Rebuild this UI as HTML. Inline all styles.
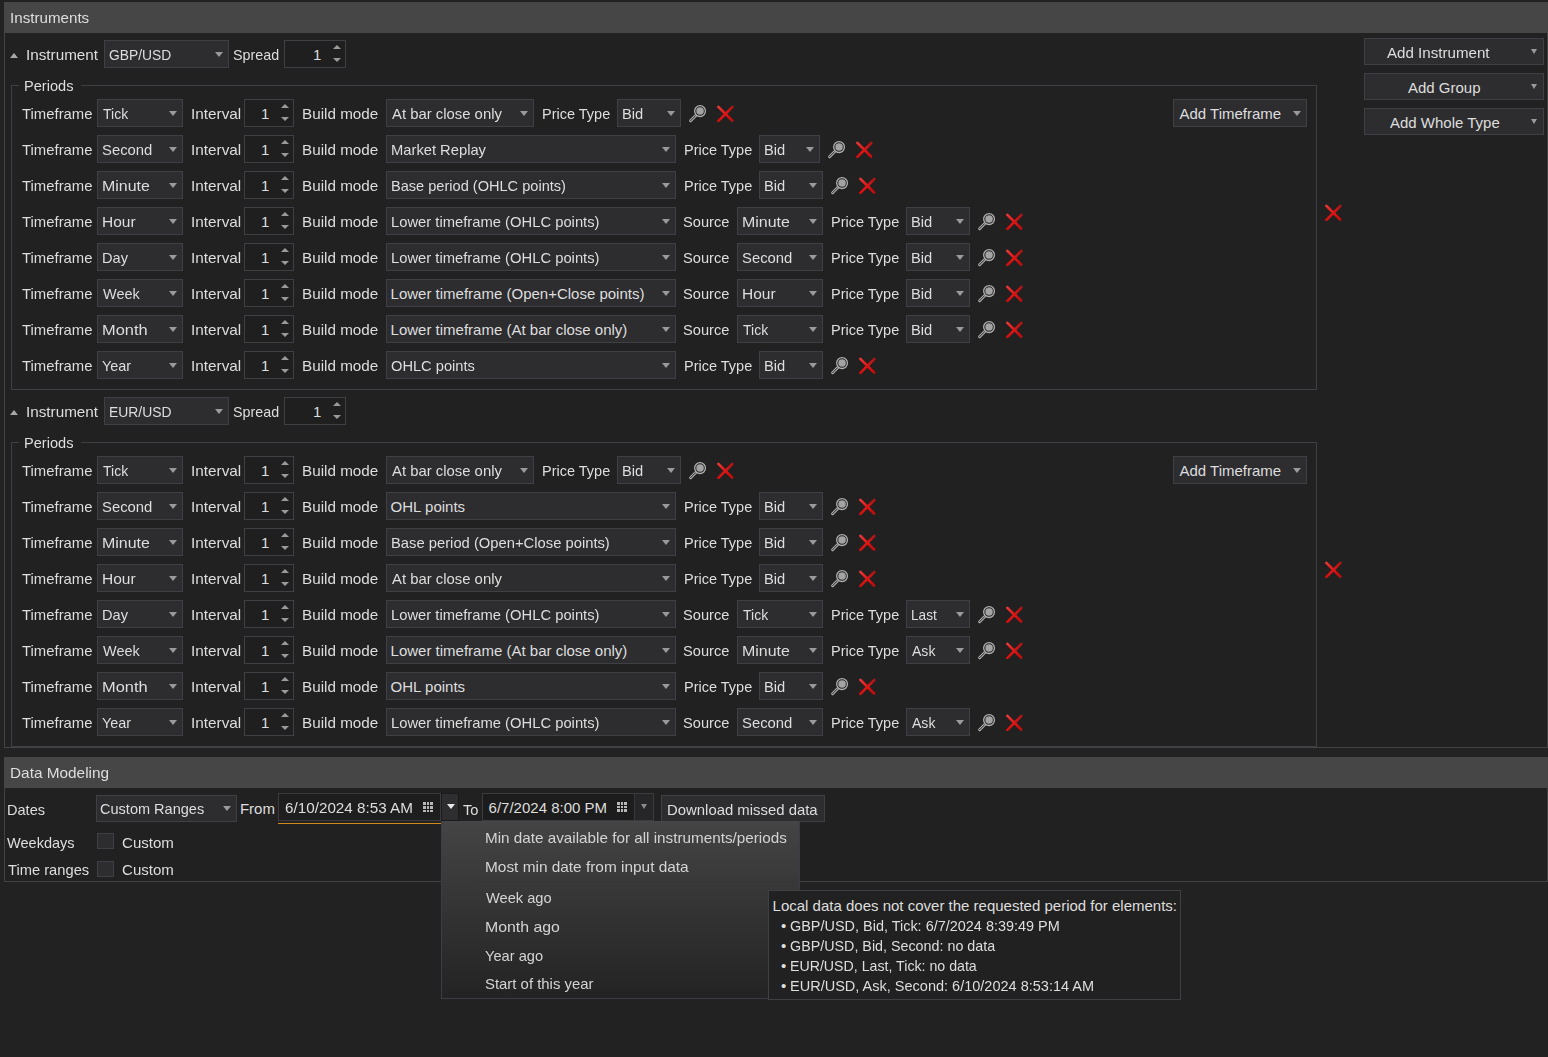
<!DOCTYPE html><html><head><meta charset="utf-8"><style>
html,body{margin:0;padding:0;}
body{width:1548px;height:1057px;background:#222222;position:relative;overflow:hidden;font-family:"Liberation Sans",sans-serif;font-size:15px;color:#dedede;}
.t{position:absolute;white-space:nowrap;line-height:17px;transform-origin:0 0;}
.cb,.nb,.bt,.pnl,.hdr,.gb,.ad,.ic{position:absolute;box-sizing:border-box;}
.hdr{background:#464646;}
.pnl{background:#212121;border-left:1px solid #434343;border-right:1px solid #434343;border-bottom:1px solid #434343;}
.gb{border:1px solid #3f3f46;}
.cb{background:#2d2d30;border:1px solid #3f3f46;}
.nb{background:#1f1f1f;border:1px solid #3f3f46;}
.bt{background:#2d2d30;border:1px solid #3f3f46;}
.ad{width:0;height:0;}
</style></head><body>
<svg width="0" height="0" style="position:absolute"><defs>
<filter id="bl" x="-30%" y="-30%" width="160%" height="160%"><feGaussianBlur stdDeviation="0.55"/></filter>
<linearGradient id="rg1" gradientUnits="userSpaceOnUse" x1="5" y1="4" x2="19" y2="18"><stop offset="0" stop-color="#ea3a3a"/><stop offset="0.5" stop-color="#e21818"/><stop offset="1" stop-color="#c00a0a"/></linearGradient><linearGradient id="rg2" gradientUnits="userSpaceOnUse" x1="19" y1="4" x2="5" y2="18"><stop offset="0" stop-color="#a81414"/><stop offset="0.5" stop-color="#d81818"/><stop offset="1" stop-color="#d41010"/></linearGradient>
</defs></svg>

<div class="hdr" style="left:4px;top:2px;width:1544px;height:31px;"></div>
<div class="t" style="left:9.60px;top:9.00px;transform:scaleX(1.0104);">Instruments</div>
<div class="pnl" style="left:4px;top:33px;width:1544px;height:715px;"></div>
<div class="ad" style="left:10.3px;top:52.5px;border-left:4.0px solid transparent;border-right:4.0px solid transparent;border-bottom:5px solid #a8a8a8;"></div>
<div class="t" style="left:25.60px;top:46.00px;transform:scaleX(1.0171);">Instrument</div>
<div class="cb" style="left:104px;top:40px;width:125px;height:28px;"></div>
<div class="t" style="left:109.10px;top:46.00px;transform:scaleX(0.9227);">GBP/USD</div>
<div class="ad" style="left:215.0px;top:52.0px;border-left:4.0px solid transparent;border-right:4.0px solid transparent;border-top:5px solid #9a9a9a;"></div>
<div class="t" style="left:233.20px;top:46.00px;transform:scaleX(0.9532);">Spread</div>
<div class="nb" style="left:284px;top:40px;width:62px;height:28px;"></div>
<div class="t" style="left:313px;top:46px">1</div>
<div class="ad" style="left:333.0px;top:44.95px;border-left:4.0px solid transparent;border-right:4.0px solid transparent;border-bottom:4.5px solid #9a9a9a;"></div>
<div class="ad" style="left:333.0px;top:57.75px;border-left:4.0px solid transparent;border-right:4.0px solid transparent;border-top:4.5px solid #9a9a9a;"></div>
<div class="gb" style="left:11px;top:85px;width:1306px;height:305px;"></div>
<div style="position:absolute;left:19px;top:80px;width:62px;height:10px;background:#212121"></div>
<div class="t" style="left:23.70px;top:77.00px;transform:scaleX(0.9735);">Periods</div>
<div class="bt" style="left:1173px;top:99px;width:134px;height:28px;"></div>
<div class="t" style="left:1179.50px;top:105.00px;">Add Timeframe</div>
<div class="ad" style="left:1292.5px;top:111.0px;border-left:4.0px solid transparent;border-right:4.0px solid transparent;border-top:5px solid #9a9a9a;"></div>
<svg class="ic" style="left:1321.2px;top:200.6px" width="24" height="24" viewBox="0 0 24 24"><g stroke-width="2.7" stroke-linecap="round" filter="url(#bl)"><line x1="5.4" y1="4.9" x2="19.1" y2="18.5" stroke="url(#rg1)"/><line x1="19.3" y1="5.0" x2="5.4" y2="18.9" stroke="url(#rg2)"/></g></svg>
<div class="t" style="left:22.10px;top:105.00px;transform:scaleX(0.9915);">Timeframe</div>
<div class="cb" style="left:97px;top:99px;width:86px;height:28px;"></div>
<div class="t" style="left:102.60px;top:105.00px;transform:scaleX(0.9333);">Tick</div>
<div class="ad" style="left:169.0px;top:111.0px;border-left:4.0px solid transparent;border-right:4.0px solid transparent;border-top:5px solid #9a9a9a;"></div>
<div class="t" style="left:190.80px;top:105.00px;transform:scaleX(1.0213);">Interval</div>
<div class="nb" style="left:244px;top:99px;width:50px;height:28px;"></div>
<div class="t" style="left:261px;top:105px">1</div>
<div class="ad" style="left:281.0px;top:103.55px;border-left:4.0px solid transparent;border-right:4.0px solid transparent;border-bottom:4.5px solid #9a9a9a;"></div>
<div class="ad" style="left:281.0px;top:116.75px;border-left:4.0px solid transparent;border-right:4.0px solid transparent;border-top:4.5px solid #9a9a9a;"></div>
<div class="t" style="left:301.60px;top:105.00px;transform:scaleX(1.0162);">Build mode</div>
<div class="cb" style="left:386px;top:99px;width:148px;height:28px;"></div>
<div class="t" style="left:391.60px;top:105.00px;transform:scaleX(0.9910);">At bar close only</div>
<div class="ad" style="left:520.0px;top:111.0px;border-left:4.0px solid transparent;border-right:4.0px solid transparent;border-top:5px solid #9a9a9a;"></div>
<div class="t" style="left:541.60px;top:105.00px;transform:scaleX(0.9667);">Price Type</div>
<div class="cb" style="left:617px;top:99px;width:64px;height:28px;"></div>
<div class="t" style="left:621.60px;top:105.00px;transform:scaleX(0.9800);">Bid</div>
<div class="ad" style="left:667.0px;top:111.0px;border-left:4.0px solid transparent;border-right:4.0px solid transparent;border-top:5px solid #9a9a9a;"></div>
<svg class="ic" style="left:687px;top:101px" width="24" height="24" viewBox="0 0 24 24"><line x1="3.6" y1="19.7" x2="8.8" y2="14.5" stroke="#b0b0b0" stroke-width="2.9" stroke-linecap="round"/><line x1="3.6" y1="19.7" x2="8.8" y2="14.5" stroke="#232323" stroke-width="1.0" stroke-linecap="round"/><circle cx="13.05" cy="10.1" r="5.4" fill="#222222" stroke="#b0b0b0" stroke-width="1.3"/><circle cx="13.05" cy="10.1" r="3.75" fill="#a3a3a3"/></svg>
<svg class="ic" style="left:713.2px;top:102px" width="24" height="24" viewBox="0 0 24 24"><g stroke-width="2.7" stroke-linecap="round" filter="url(#bl)"><line x1="5.4" y1="4.9" x2="19.1" y2="18.5" stroke="url(#rg1)"/><line x1="19.3" y1="5.0" x2="5.4" y2="18.9" stroke="url(#rg2)"/></g></svg>
<div class="t" style="left:22.10px;top:141.00px;transform:scaleX(0.9915);">Timeframe</div>
<div class="cb" style="left:97px;top:135px;width:86px;height:28px;"></div>
<div class="t" style="left:101.60px;top:141.00px;transform:scaleX(0.9898);">Second</div>
<div class="ad" style="left:169.0px;top:147.0px;border-left:4.0px solid transparent;border-right:4.0px solid transparent;border-top:5px solid #9a9a9a;"></div>
<div class="t" style="left:190.80px;top:141.00px;transform:scaleX(1.0213);">Interval</div>
<div class="nb" style="left:244px;top:135px;width:50px;height:28px;"></div>
<div class="t" style="left:261px;top:141px">1</div>
<div class="ad" style="left:281.0px;top:139.55px;border-left:4.0px solid transparent;border-right:4.0px solid transparent;border-bottom:4.5px solid #9a9a9a;"></div>
<div class="ad" style="left:281.0px;top:152.75px;border-left:4.0px solid transparent;border-right:4.0px solid transparent;border-top:4.5px solid #9a9a9a;"></div>
<div class="t" style="left:301.60px;top:141.00px;transform:scaleX(1.0162);">Build mode</div>
<div class="cb" style="left:386px;top:135px;width:290px;height:28px;"></div>
<div class="t" style="left:390.60px;top:141.00px;transform:scaleX(0.9823);">Market Replay</div>
<div class="ad" style="left:662.0px;top:147.0px;border-left:4.0px solid transparent;border-right:4.0px solid transparent;border-top:5px solid #9a9a9a;"></div>
<div class="t" style="left:683.60px;top:141.00px;transform:scaleX(0.9667);">Price Type</div>
<div class="cb" style="left:759px;top:135px;width:61px;height:28px;"></div>
<div class="t" style="left:763.60px;top:141.00px;transform:scaleX(0.9800);">Bid</div>
<div class="ad" style="left:806.0px;top:147.0px;border-left:4.0px solid transparent;border-right:4.0px solid transparent;border-top:5px solid #9a9a9a;"></div>
<svg class="ic" style="left:826px;top:137px" width="24" height="24" viewBox="0 0 24 24"><line x1="3.6" y1="19.7" x2="8.8" y2="14.5" stroke="#b0b0b0" stroke-width="2.9" stroke-linecap="round"/><line x1="3.6" y1="19.7" x2="8.8" y2="14.5" stroke="#232323" stroke-width="1.0" stroke-linecap="round"/><circle cx="13.05" cy="10.1" r="5.4" fill="#222222" stroke="#b0b0b0" stroke-width="1.3"/><circle cx="13.05" cy="10.1" r="3.75" fill="#a3a3a3"/></svg>
<svg class="ic" style="left:852.2px;top:138px" width="24" height="24" viewBox="0 0 24 24"><g stroke-width="2.7" stroke-linecap="round" filter="url(#bl)"><line x1="5.4" y1="4.9" x2="19.1" y2="18.5" stroke="url(#rg1)"/><line x1="19.3" y1="5.0" x2="5.4" y2="18.9" stroke="url(#rg2)"/></g></svg>
<div class="t" style="left:22.10px;top:177.00px;transform:scaleX(0.9915);">Timeframe</div>
<div class="cb" style="left:97px;top:171px;width:86px;height:28px;"></div>
<div class="t" style="left:101.60px;top:177.00px;transform:scaleX(1.0636);">Minute</div>
<div class="ad" style="left:169.0px;top:183.0px;border-left:4.0px solid transparent;border-right:4.0px solid transparent;border-top:5px solid #9a9a9a;"></div>
<div class="t" style="left:190.80px;top:177.00px;transform:scaleX(1.0213);">Interval</div>
<div class="nb" style="left:244px;top:171px;width:50px;height:28px;"></div>
<div class="t" style="left:261px;top:177px">1</div>
<div class="ad" style="left:281.0px;top:175.55px;border-left:4.0px solid transparent;border-right:4.0px solid transparent;border-bottom:4.5px solid #9a9a9a;"></div>
<div class="ad" style="left:281.0px;top:188.75px;border-left:4.0px solid transparent;border-right:4.0px solid transparent;border-top:4.5px solid #9a9a9a;"></div>
<div class="t" style="left:301.60px;top:177.00px;transform:scaleX(1.0162);">Build mode</div>
<div class="cb" style="left:386px;top:171px;width:290px;height:28px;"></div>
<div class="t" style="left:390.60px;top:177.00px;transform:scaleX(0.9713);">Base period (OHLC points)</div>
<div class="ad" style="left:662.0px;top:183.0px;border-left:4.0px solid transparent;border-right:4.0px solid transparent;border-top:5px solid #9a9a9a;"></div>
<div class="t" style="left:683.60px;top:177.00px;transform:scaleX(0.9667);">Price Type</div>
<div class="cb" style="left:759px;top:171px;width:64px;height:28px;"></div>
<div class="t" style="left:763.60px;top:177.00px;transform:scaleX(0.9800);">Bid</div>
<div class="ad" style="left:809.0px;top:183.0px;border-left:4.0px solid transparent;border-right:4.0px solid transparent;border-top:5px solid #9a9a9a;"></div>
<svg class="ic" style="left:829px;top:173px" width="24" height="24" viewBox="0 0 24 24"><line x1="3.6" y1="19.7" x2="8.8" y2="14.5" stroke="#b0b0b0" stroke-width="2.9" stroke-linecap="round"/><line x1="3.6" y1="19.7" x2="8.8" y2="14.5" stroke="#232323" stroke-width="1.0" stroke-linecap="round"/><circle cx="13.05" cy="10.1" r="5.4" fill="#222222" stroke="#b0b0b0" stroke-width="1.3"/><circle cx="13.05" cy="10.1" r="3.75" fill="#a3a3a3"/></svg>
<svg class="ic" style="left:855.2px;top:174px" width="24" height="24" viewBox="0 0 24 24"><g stroke-width="2.7" stroke-linecap="round" filter="url(#bl)"><line x1="5.4" y1="4.9" x2="19.1" y2="18.5" stroke="url(#rg1)"/><line x1="19.3" y1="5.0" x2="5.4" y2="18.9" stroke="url(#rg2)"/></g></svg>
<div class="t" style="left:22.10px;top:213.00px;transform:scaleX(0.9915);">Timeframe</div>
<div class="cb" style="left:97px;top:207px;width:86px;height:28px;"></div>
<div class="t" style="left:101.60px;top:213.00px;transform:scaleX(1.0344);">Hour</div>
<div class="ad" style="left:169.0px;top:219.0px;border-left:4.0px solid transparent;border-right:4.0px solid transparent;border-top:5px solid #9a9a9a;"></div>
<div class="t" style="left:190.80px;top:213.00px;transform:scaleX(1.0213);">Interval</div>
<div class="nb" style="left:244px;top:207px;width:50px;height:28px;"></div>
<div class="t" style="left:261px;top:213px">1</div>
<div class="ad" style="left:281.0px;top:211.55px;border-left:4.0px solid transparent;border-right:4.0px solid transparent;border-bottom:4.5px solid #9a9a9a;"></div>
<div class="ad" style="left:281.0px;top:224.75px;border-left:4.0px solid transparent;border-right:4.0px solid transparent;border-top:4.5px solid #9a9a9a;"></div>
<div class="t" style="left:301.60px;top:213.00px;transform:scaleX(1.0162);">Build mode</div>
<div class="cb" style="left:386px;top:207px;width:290px;height:28px;"></div>
<div class="t" style="left:390.60px;top:213.00px;transform:scaleX(0.9848);">Lower timeframe (OHLC points)</div>
<div class="ad" style="left:662.0px;top:219.0px;border-left:4.0px solid transparent;border-right:4.0px solid transparent;border-top:5px solid #9a9a9a;"></div>
<div class="t" style="left:683.40px;top:213.00px;transform:scaleX(0.9761);">Source</div>
<div class="cb" style="left:737px;top:207px;width:86px;height:28px;"></div>
<div class="t" style="left:741.60px;top:213.00px;transform:scaleX(1.0636);">Minute</div>
<div class="ad" style="left:809.0px;top:219.0px;border-left:4.0px solid transparent;border-right:4.0px solid transparent;border-top:5px solid #9a9a9a;"></div>
<div class="t" style="left:830.50px;top:213.00px;transform:scaleX(0.9667);">Price Type</div>
<div class="cb" style="left:906px;top:207px;width:64px;height:28px;"></div>
<div class="t" style="left:910.60px;top:213.00px;transform:scaleX(0.9800);">Bid</div>
<div class="ad" style="left:956.0px;top:219.0px;border-left:4.0px solid transparent;border-right:4.0px solid transparent;border-top:5px solid #9a9a9a;"></div>
<svg class="ic" style="left:976px;top:209px" width="24" height="24" viewBox="0 0 24 24"><line x1="3.6" y1="19.7" x2="8.8" y2="14.5" stroke="#b0b0b0" stroke-width="2.9" stroke-linecap="round"/><line x1="3.6" y1="19.7" x2="8.8" y2="14.5" stroke="#232323" stroke-width="1.0" stroke-linecap="round"/><circle cx="13.05" cy="10.1" r="5.4" fill="#222222" stroke="#b0b0b0" stroke-width="1.3"/><circle cx="13.05" cy="10.1" r="3.75" fill="#a3a3a3"/></svg>
<svg class="ic" style="left:1002.2px;top:210px" width="24" height="24" viewBox="0 0 24 24"><g stroke-width="2.7" stroke-linecap="round" filter="url(#bl)"><line x1="5.4" y1="4.9" x2="19.1" y2="18.5" stroke="url(#rg1)"/><line x1="19.3" y1="5.0" x2="5.4" y2="18.9" stroke="url(#rg2)"/></g></svg>
<div class="t" style="left:22.10px;top:249.00px;transform:scaleX(0.9915);">Timeframe</div>
<div class="cb" style="left:97px;top:243px;width:86px;height:28px;"></div>
<div class="t" style="left:101.60px;top:249.00px;transform:scaleX(0.9731);">Day</div>
<div class="ad" style="left:169.0px;top:255.0px;border-left:4.0px solid transparent;border-right:4.0px solid transparent;border-top:5px solid #9a9a9a;"></div>
<div class="t" style="left:190.80px;top:249.00px;transform:scaleX(1.0213);">Interval</div>
<div class="nb" style="left:244px;top:243px;width:50px;height:28px;"></div>
<div class="t" style="left:261px;top:249px">1</div>
<div class="ad" style="left:281.0px;top:247.55px;border-left:4.0px solid transparent;border-right:4.0px solid transparent;border-bottom:4.5px solid #9a9a9a;"></div>
<div class="ad" style="left:281.0px;top:260.75px;border-left:4.0px solid transparent;border-right:4.0px solid transparent;border-top:4.5px solid #9a9a9a;"></div>
<div class="t" style="left:301.60px;top:249.00px;transform:scaleX(1.0162);">Build mode</div>
<div class="cb" style="left:386px;top:243px;width:290px;height:28px;"></div>
<div class="t" style="left:390.60px;top:249.00px;transform:scaleX(0.9848);">Lower timeframe (OHLC points)</div>
<div class="ad" style="left:662.0px;top:255.0px;border-left:4.0px solid transparent;border-right:4.0px solid transparent;border-top:5px solid #9a9a9a;"></div>
<div class="t" style="left:683.40px;top:249.00px;transform:scaleX(0.9761);">Source</div>
<div class="cb" style="left:737px;top:243px;width:86px;height:28px;"></div>
<div class="t" style="left:741.60px;top:249.00px;transform:scaleX(0.9898);">Second</div>
<div class="ad" style="left:809.0px;top:255.0px;border-left:4.0px solid transparent;border-right:4.0px solid transparent;border-top:5px solid #9a9a9a;"></div>
<div class="t" style="left:830.50px;top:249.00px;transform:scaleX(0.9667);">Price Type</div>
<div class="cb" style="left:906px;top:243px;width:64px;height:28px;"></div>
<div class="t" style="left:910.60px;top:249.00px;transform:scaleX(0.9800);">Bid</div>
<div class="ad" style="left:956.0px;top:255.0px;border-left:4.0px solid transparent;border-right:4.0px solid transparent;border-top:5px solid #9a9a9a;"></div>
<svg class="ic" style="left:976px;top:245px" width="24" height="24" viewBox="0 0 24 24"><line x1="3.6" y1="19.7" x2="8.8" y2="14.5" stroke="#b0b0b0" stroke-width="2.9" stroke-linecap="round"/><line x1="3.6" y1="19.7" x2="8.8" y2="14.5" stroke="#232323" stroke-width="1.0" stroke-linecap="round"/><circle cx="13.05" cy="10.1" r="5.4" fill="#222222" stroke="#b0b0b0" stroke-width="1.3"/><circle cx="13.05" cy="10.1" r="3.75" fill="#a3a3a3"/></svg>
<svg class="ic" style="left:1002.2px;top:246px" width="24" height="24" viewBox="0 0 24 24"><g stroke-width="2.7" stroke-linecap="round" filter="url(#bl)"><line x1="5.4" y1="4.9" x2="19.1" y2="18.5" stroke="url(#rg1)"/><line x1="19.3" y1="5.0" x2="5.4" y2="18.9" stroke="url(#rg2)"/></g></svg>
<div class="t" style="left:22.10px;top:285.00px;transform:scaleX(0.9915);">Timeframe</div>
<div class="cb" style="left:97px;top:279px;width:86px;height:28px;"></div>
<div class="t" style="left:102.60px;top:285.00px;transform:scaleX(0.9632);">Week</div>
<div class="ad" style="left:169.0px;top:291.0px;border-left:4.0px solid transparent;border-right:4.0px solid transparent;border-top:5px solid #9a9a9a;"></div>
<div class="t" style="left:190.80px;top:285.00px;transform:scaleX(1.0213);">Interval</div>
<div class="nb" style="left:244px;top:279px;width:50px;height:28px;"></div>
<div class="t" style="left:261px;top:285px">1</div>
<div class="ad" style="left:281.0px;top:283.55px;border-left:4.0px solid transparent;border-right:4.0px solid transparent;border-bottom:4.5px solid #9a9a9a;"></div>
<div class="ad" style="left:281.0px;top:296.75px;border-left:4.0px solid transparent;border-right:4.0px solid transparent;border-top:4.5px solid #9a9a9a;"></div>
<div class="t" style="left:301.60px;top:285.00px;transform:scaleX(1.0162);">Build mode</div>
<div class="cb" style="left:386px;top:279px;width:290px;height:28px;"></div>
<div class="t" style="left:390.60px;top:285.00px;">Lower timeframe (Open+Close points)</div>
<div class="ad" style="left:662.0px;top:291.0px;border-left:4.0px solid transparent;border-right:4.0px solid transparent;border-top:5px solid #9a9a9a;"></div>
<div class="t" style="left:683.40px;top:285.00px;transform:scaleX(0.9761);">Source</div>
<div class="cb" style="left:737px;top:279px;width:86px;height:28px;"></div>
<div class="t" style="left:741.60px;top:285.00px;transform:scaleX(1.0344);">Hour</div>
<div class="ad" style="left:809.0px;top:291.0px;border-left:4.0px solid transparent;border-right:4.0px solid transparent;border-top:5px solid #9a9a9a;"></div>
<div class="t" style="left:830.50px;top:285.00px;transform:scaleX(0.9667);">Price Type</div>
<div class="cb" style="left:906px;top:279px;width:64px;height:28px;"></div>
<div class="t" style="left:910.60px;top:285.00px;transform:scaleX(0.9800);">Bid</div>
<div class="ad" style="left:956.0px;top:291.0px;border-left:4.0px solid transparent;border-right:4.0px solid transparent;border-top:5px solid #9a9a9a;"></div>
<svg class="ic" style="left:976px;top:281px" width="24" height="24" viewBox="0 0 24 24"><line x1="3.6" y1="19.7" x2="8.8" y2="14.5" stroke="#b0b0b0" stroke-width="2.9" stroke-linecap="round"/><line x1="3.6" y1="19.7" x2="8.8" y2="14.5" stroke="#232323" stroke-width="1.0" stroke-linecap="round"/><circle cx="13.05" cy="10.1" r="5.4" fill="#222222" stroke="#b0b0b0" stroke-width="1.3"/><circle cx="13.05" cy="10.1" r="3.75" fill="#a3a3a3"/></svg>
<svg class="ic" style="left:1002.2px;top:282px" width="24" height="24" viewBox="0 0 24 24"><g stroke-width="2.7" stroke-linecap="round" filter="url(#bl)"><line x1="5.4" y1="4.9" x2="19.1" y2="18.5" stroke="url(#rg1)"/><line x1="19.3" y1="5.0" x2="5.4" y2="18.9" stroke="url(#rg2)"/></g></svg>
<div class="t" style="left:22.10px;top:321.00px;transform:scaleX(0.9915);">Timeframe</div>
<div class="cb" style="left:97px;top:315px;width:86px;height:28px;"></div>
<div class="t" style="left:101.60px;top:321.00px;transform:scaleX(1.0925);">Month</div>
<div class="ad" style="left:169.0px;top:327.0px;border-left:4.0px solid transparent;border-right:4.0px solid transparent;border-top:5px solid #9a9a9a;"></div>
<div class="t" style="left:190.80px;top:321.00px;transform:scaleX(1.0213);">Interval</div>
<div class="nb" style="left:244px;top:315px;width:50px;height:28px;"></div>
<div class="t" style="left:261px;top:321px">1</div>
<div class="ad" style="left:281.0px;top:319.55px;border-left:4.0px solid transparent;border-right:4.0px solid transparent;border-bottom:4.5px solid #9a9a9a;"></div>
<div class="ad" style="left:281.0px;top:332.75px;border-left:4.0px solid transparent;border-right:4.0px solid transparent;border-top:4.5px solid #9a9a9a;"></div>
<div class="t" style="left:301.60px;top:321.00px;transform:scaleX(1.0162);">Build mode</div>
<div class="cb" style="left:386px;top:315px;width:290px;height:28px;"></div>
<div class="t" style="left:390.60px;top:321.00px;">Lower timeframe (At bar close only)</div>
<div class="ad" style="left:662.0px;top:327.0px;border-left:4.0px solid transparent;border-right:4.0px solid transparent;border-top:5px solid #9a9a9a;"></div>
<div class="t" style="left:683.40px;top:321.00px;transform:scaleX(0.9761);">Source</div>
<div class="cb" style="left:737px;top:315px;width:86px;height:28px;"></div>
<div class="t" style="left:742.60px;top:321.00px;transform:scaleX(0.9333);">Tick</div>
<div class="ad" style="left:809.0px;top:327.0px;border-left:4.0px solid transparent;border-right:4.0px solid transparent;border-top:5px solid #9a9a9a;"></div>
<div class="t" style="left:830.50px;top:321.00px;transform:scaleX(0.9667);">Price Type</div>
<div class="cb" style="left:906px;top:315px;width:64px;height:28px;"></div>
<div class="t" style="left:910.60px;top:321.00px;transform:scaleX(0.9800);">Bid</div>
<div class="ad" style="left:956.0px;top:327.0px;border-left:4.0px solid transparent;border-right:4.0px solid transparent;border-top:5px solid #9a9a9a;"></div>
<svg class="ic" style="left:976px;top:317px" width="24" height="24" viewBox="0 0 24 24"><line x1="3.6" y1="19.7" x2="8.8" y2="14.5" stroke="#b0b0b0" stroke-width="2.9" stroke-linecap="round"/><line x1="3.6" y1="19.7" x2="8.8" y2="14.5" stroke="#232323" stroke-width="1.0" stroke-linecap="round"/><circle cx="13.05" cy="10.1" r="5.4" fill="#222222" stroke="#b0b0b0" stroke-width="1.3"/><circle cx="13.05" cy="10.1" r="3.75" fill="#a3a3a3"/></svg>
<svg class="ic" style="left:1002.2px;top:318px" width="24" height="24" viewBox="0 0 24 24"><g stroke-width="2.7" stroke-linecap="round" filter="url(#bl)"><line x1="5.4" y1="4.9" x2="19.1" y2="18.5" stroke="url(#rg1)"/><line x1="19.3" y1="5.0" x2="5.4" y2="18.9" stroke="url(#rg2)"/></g></svg>
<div class="t" style="left:22.10px;top:357.00px;transform:scaleX(0.9915);">Timeframe</div>
<div class="cb" style="left:97px;top:351px;width:86px;height:28px;"></div>
<div class="t" style="left:101.60px;top:357.00px;transform:scaleX(0.9621);">Year</div>
<div class="ad" style="left:169.0px;top:363.0px;border-left:4.0px solid transparent;border-right:4.0px solid transparent;border-top:5px solid #9a9a9a;"></div>
<div class="t" style="left:190.80px;top:357.00px;transform:scaleX(1.0213);">Interval</div>
<div class="nb" style="left:244px;top:351px;width:50px;height:28px;"></div>
<div class="t" style="left:261px;top:357px">1</div>
<div class="ad" style="left:281.0px;top:355.55px;border-left:4.0px solid transparent;border-right:4.0px solid transparent;border-bottom:4.5px solid #9a9a9a;"></div>
<div class="ad" style="left:281.0px;top:368.75px;border-left:4.0px solid transparent;border-right:4.0px solid transparent;border-top:4.5px solid #9a9a9a;"></div>
<div class="t" style="left:301.60px;top:357.00px;transform:scaleX(1.0162);">Build mode</div>
<div class="cb" style="left:386px;top:351px;width:290px;height:28px;"></div>
<div class="t" style="left:390.60px;top:357.00px;transform:scaleX(0.9762);">OHLC points</div>
<div class="ad" style="left:662.0px;top:363.0px;border-left:4.0px solid transparent;border-right:4.0px solid transparent;border-top:5px solid #9a9a9a;"></div>
<div class="t" style="left:683.60px;top:357.00px;transform:scaleX(0.9667);">Price Type</div>
<div class="cb" style="left:759px;top:351px;width:64px;height:28px;"></div>
<div class="t" style="left:763.60px;top:357.00px;transform:scaleX(0.9800);">Bid</div>
<div class="ad" style="left:809.0px;top:363.0px;border-left:4.0px solid transparent;border-right:4.0px solid transparent;border-top:5px solid #9a9a9a;"></div>
<svg class="ic" style="left:829px;top:353px" width="24" height="24" viewBox="0 0 24 24"><line x1="3.6" y1="19.7" x2="8.8" y2="14.5" stroke="#b0b0b0" stroke-width="2.9" stroke-linecap="round"/><line x1="3.6" y1="19.7" x2="8.8" y2="14.5" stroke="#232323" stroke-width="1.0" stroke-linecap="round"/><circle cx="13.05" cy="10.1" r="5.4" fill="#222222" stroke="#b0b0b0" stroke-width="1.3"/><circle cx="13.05" cy="10.1" r="3.75" fill="#a3a3a3"/></svg>
<svg class="ic" style="left:855.2px;top:354px" width="24" height="24" viewBox="0 0 24 24"><g stroke-width="2.7" stroke-linecap="round" filter="url(#bl)"><line x1="5.4" y1="4.9" x2="19.1" y2="18.5" stroke="url(#rg1)"/><line x1="19.3" y1="5.0" x2="5.4" y2="18.9" stroke="url(#rg2)"/></g></svg>
<div class="ad" style="left:10.3px;top:409.5px;border-left:4.0px solid transparent;border-right:4.0px solid transparent;border-bottom:5px solid #a8a8a8;"></div>
<div class="t" style="left:25.60px;top:403.00px;transform:scaleX(1.0171);">Instrument</div>
<div class="cb" style="left:104px;top:397px;width:125px;height:28px;"></div>
<div class="t" style="left:109.10px;top:403.00px;transform:scaleX(0.9273);">EUR/USD</div>
<div class="ad" style="left:215.0px;top:409.0px;border-left:4.0px solid transparent;border-right:4.0px solid transparent;border-top:5px solid #9a9a9a;"></div>
<div class="t" style="left:233.20px;top:403.00px;transform:scaleX(0.9532);">Spread</div>
<div class="nb" style="left:284px;top:397px;width:62px;height:28px;"></div>
<div class="t" style="left:313px;top:403px">1</div>
<div class="ad" style="left:333.0px;top:401.95px;border-left:4.0px solid transparent;border-right:4.0px solid transparent;border-bottom:4.5px solid #9a9a9a;"></div>
<div class="ad" style="left:333.0px;top:414.75px;border-left:4.0px solid transparent;border-right:4.0px solid transparent;border-top:4.5px solid #9a9a9a;"></div>
<div class="gb" style="left:11px;top:442px;width:1306px;height:305px;"></div>
<div style="position:absolute;left:19px;top:437px;width:62px;height:10px;background:#212121"></div>
<div class="t" style="left:23.70px;top:434.00px;transform:scaleX(0.9735);">Periods</div>
<div class="bt" style="left:1173px;top:456px;width:134px;height:28px;"></div>
<div class="t" style="left:1179.50px;top:462.00px;">Add Timeframe</div>
<div class="ad" style="left:1292.5px;top:468.0px;border-left:4.0px solid transparent;border-right:4.0px solid transparent;border-top:5px solid #9a9a9a;"></div>
<svg class="ic" style="left:1321.2px;top:557.6px" width="24" height="24" viewBox="0 0 24 24"><g stroke-width="2.7" stroke-linecap="round" filter="url(#bl)"><line x1="5.4" y1="4.9" x2="19.1" y2="18.5" stroke="url(#rg1)"/><line x1="19.3" y1="5.0" x2="5.4" y2="18.9" stroke="url(#rg2)"/></g></svg>
<div class="t" style="left:22.10px;top:462.00px;transform:scaleX(0.9915);">Timeframe</div>
<div class="cb" style="left:97px;top:456px;width:86px;height:28px;"></div>
<div class="t" style="left:102.60px;top:462.00px;transform:scaleX(0.9333);">Tick</div>
<div class="ad" style="left:169.0px;top:468.0px;border-left:4.0px solid transparent;border-right:4.0px solid transparent;border-top:5px solid #9a9a9a;"></div>
<div class="t" style="left:190.80px;top:462.00px;transform:scaleX(1.0213);">Interval</div>
<div class="nb" style="left:244px;top:456px;width:50px;height:28px;"></div>
<div class="t" style="left:261px;top:462px">1</div>
<div class="ad" style="left:281.0px;top:460.55px;border-left:4.0px solid transparent;border-right:4.0px solid transparent;border-bottom:4.5px solid #9a9a9a;"></div>
<div class="ad" style="left:281.0px;top:473.75px;border-left:4.0px solid transparent;border-right:4.0px solid transparent;border-top:4.5px solid #9a9a9a;"></div>
<div class="t" style="left:301.60px;top:462.00px;transform:scaleX(1.0162);">Build mode</div>
<div class="cb" style="left:386px;top:456px;width:148px;height:28px;"></div>
<div class="t" style="left:391.60px;top:462.00px;transform:scaleX(0.9910);">At bar close only</div>
<div class="ad" style="left:520.0px;top:468.0px;border-left:4.0px solid transparent;border-right:4.0px solid transparent;border-top:5px solid #9a9a9a;"></div>
<div class="t" style="left:541.60px;top:462.00px;transform:scaleX(0.9667);">Price Type</div>
<div class="cb" style="left:617px;top:456px;width:64px;height:28px;"></div>
<div class="t" style="left:621.60px;top:462.00px;transform:scaleX(0.9800);">Bid</div>
<div class="ad" style="left:667.0px;top:468.0px;border-left:4.0px solid transparent;border-right:4.0px solid transparent;border-top:5px solid #9a9a9a;"></div>
<svg class="ic" style="left:687px;top:458px" width="24" height="24" viewBox="0 0 24 24"><line x1="3.6" y1="19.7" x2="8.8" y2="14.5" stroke="#b0b0b0" stroke-width="2.9" stroke-linecap="round"/><line x1="3.6" y1="19.7" x2="8.8" y2="14.5" stroke="#232323" stroke-width="1.0" stroke-linecap="round"/><circle cx="13.05" cy="10.1" r="5.4" fill="#222222" stroke="#b0b0b0" stroke-width="1.3"/><circle cx="13.05" cy="10.1" r="3.75" fill="#a3a3a3"/></svg>
<svg class="ic" style="left:713.2px;top:459px" width="24" height="24" viewBox="0 0 24 24"><g stroke-width="2.7" stroke-linecap="round" filter="url(#bl)"><line x1="5.4" y1="4.9" x2="19.1" y2="18.5" stroke="url(#rg1)"/><line x1="19.3" y1="5.0" x2="5.4" y2="18.9" stroke="url(#rg2)"/></g></svg>
<div class="t" style="left:22.10px;top:498.00px;transform:scaleX(0.9915);">Timeframe</div>
<div class="cb" style="left:97px;top:492px;width:86px;height:28px;"></div>
<div class="t" style="left:101.60px;top:498.00px;transform:scaleX(0.9898);">Second</div>
<div class="ad" style="left:169.0px;top:504.0px;border-left:4.0px solid transparent;border-right:4.0px solid transparent;border-top:5px solid #9a9a9a;"></div>
<div class="t" style="left:190.80px;top:498.00px;transform:scaleX(1.0213);">Interval</div>
<div class="nb" style="left:244px;top:492px;width:50px;height:28px;"></div>
<div class="t" style="left:261px;top:498px">1</div>
<div class="ad" style="left:281.0px;top:496.55px;border-left:4.0px solid transparent;border-right:4.0px solid transparent;border-bottom:4.5px solid #9a9a9a;"></div>
<div class="ad" style="left:281.0px;top:509.75px;border-left:4.0px solid transparent;border-right:4.0px solid transparent;border-top:4.5px solid #9a9a9a;"></div>
<div class="t" style="left:301.60px;top:498.00px;transform:scaleX(1.0162);">Build mode</div>
<div class="cb" style="left:386px;top:492px;width:290px;height:28px;"></div>
<div class="t" style="left:390.60px;top:498.00px;">OHL points</div>
<div class="ad" style="left:662.0px;top:504.0px;border-left:4.0px solid transparent;border-right:4.0px solid transparent;border-top:5px solid #9a9a9a;"></div>
<div class="t" style="left:683.60px;top:498.00px;transform:scaleX(0.9667);">Price Type</div>
<div class="cb" style="left:759px;top:492px;width:64px;height:28px;"></div>
<div class="t" style="left:763.60px;top:498.00px;transform:scaleX(0.9800);">Bid</div>
<div class="ad" style="left:809.0px;top:504.0px;border-left:4.0px solid transparent;border-right:4.0px solid transparent;border-top:5px solid #9a9a9a;"></div>
<svg class="ic" style="left:829px;top:494px" width="24" height="24" viewBox="0 0 24 24"><line x1="3.6" y1="19.7" x2="8.8" y2="14.5" stroke="#b0b0b0" stroke-width="2.9" stroke-linecap="round"/><line x1="3.6" y1="19.7" x2="8.8" y2="14.5" stroke="#232323" stroke-width="1.0" stroke-linecap="round"/><circle cx="13.05" cy="10.1" r="5.4" fill="#222222" stroke="#b0b0b0" stroke-width="1.3"/><circle cx="13.05" cy="10.1" r="3.75" fill="#a3a3a3"/></svg>
<svg class="ic" style="left:855.2px;top:495px" width="24" height="24" viewBox="0 0 24 24"><g stroke-width="2.7" stroke-linecap="round" filter="url(#bl)"><line x1="5.4" y1="4.9" x2="19.1" y2="18.5" stroke="url(#rg1)"/><line x1="19.3" y1="5.0" x2="5.4" y2="18.9" stroke="url(#rg2)"/></g></svg>
<div class="t" style="left:22.10px;top:534.00px;transform:scaleX(0.9915);">Timeframe</div>
<div class="cb" style="left:97px;top:528px;width:86px;height:28px;"></div>
<div class="t" style="left:101.60px;top:534.00px;transform:scaleX(1.0636);">Minute</div>
<div class="ad" style="left:169.0px;top:540.0px;border-left:4.0px solid transparent;border-right:4.0px solid transparent;border-top:5px solid #9a9a9a;"></div>
<div class="t" style="left:190.80px;top:534.00px;transform:scaleX(1.0213);">Interval</div>
<div class="nb" style="left:244px;top:528px;width:50px;height:28px;"></div>
<div class="t" style="left:261px;top:534px">1</div>
<div class="ad" style="left:281.0px;top:532.55px;border-left:4.0px solid transparent;border-right:4.0px solid transparent;border-bottom:4.5px solid #9a9a9a;"></div>
<div class="ad" style="left:281.0px;top:545.75px;border-left:4.0px solid transparent;border-right:4.0px solid transparent;border-top:4.5px solid #9a9a9a;"></div>
<div class="t" style="left:301.60px;top:534.00px;transform:scaleX(1.0162);">Build mode</div>
<div class="cb" style="left:386px;top:528px;width:290px;height:28px;"></div>
<div class="t" style="left:390.60px;top:534.00px;transform:scaleX(0.9846);">Base period (Open+Close points)</div>
<div class="ad" style="left:662.0px;top:540.0px;border-left:4.0px solid transparent;border-right:4.0px solid transparent;border-top:5px solid #9a9a9a;"></div>
<div class="t" style="left:683.60px;top:534.00px;transform:scaleX(0.9667);">Price Type</div>
<div class="cb" style="left:759px;top:528px;width:64px;height:28px;"></div>
<div class="t" style="left:763.60px;top:534.00px;transform:scaleX(0.9800);">Bid</div>
<div class="ad" style="left:809.0px;top:540.0px;border-left:4.0px solid transparent;border-right:4.0px solid transparent;border-top:5px solid #9a9a9a;"></div>
<svg class="ic" style="left:829px;top:530px" width="24" height="24" viewBox="0 0 24 24"><line x1="3.6" y1="19.7" x2="8.8" y2="14.5" stroke="#b0b0b0" stroke-width="2.9" stroke-linecap="round"/><line x1="3.6" y1="19.7" x2="8.8" y2="14.5" stroke="#232323" stroke-width="1.0" stroke-linecap="round"/><circle cx="13.05" cy="10.1" r="5.4" fill="#222222" stroke="#b0b0b0" stroke-width="1.3"/><circle cx="13.05" cy="10.1" r="3.75" fill="#a3a3a3"/></svg>
<svg class="ic" style="left:855.2px;top:531px" width="24" height="24" viewBox="0 0 24 24"><g stroke-width="2.7" stroke-linecap="round" filter="url(#bl)"><line x1="5.4" y1="4.9" x2="19.1" y2="18.5" stroke="url(#rg1)"/><line x1="19.3" y1="5.0" x2="5.4" y2="18.9" stroke="url(#rg2)"/></g></svg>
<div class="t" style="left:22.10px;top:570.00px;transform:scaleX(0.9915);">Timeframe</div>
<div class="cb" style="left:97px;top:564px;width:86px;height:28px;"></div>
<div class="t" style="left:101.60px;top:570.00px;transform:scaleX(1.0344);">Hour</div>
<div class="ad" style="left:169.0px;top:576.0px;border-left:4.0px solid transparent;border-right:4.0px solid transparent;border-top:5px solid #9a9a9a;"></div>
<div class="t" style="left:190.80px;top:570.00px;transform:scaleX(1.0213);">Interval</div>
<div class="nb" style="left:244px;top:564px;width:50px;height:28px;"></div>
<div class="t" style="left:261px;top:570px">1</div>
<div class="ad" style="left:281.0px;top:568.55px;border-left:4.0px solid transparent;border-right:4.0px solid transparent;border-bottom:4.5px solid #9a9a9a;"></div>
<div class="ad" style="left:281.0px;top:581.75px;border-left:4.0px solid transparent;border-right:4.0px solid transparent;border-top:4.5px solid #9a9a9a;"></div>
<div class="t" style="left:301.60px;top:570.00px;transform:scaleX(1.0162);">Build mode</div>
<div class="cb" style="left:386px;top:564px;width:290px;height:28px;"></div>
<div class="t" style="left:391.60px;top:570.00px;transform:scaleX(0.9910);">At bar close only</div>
<div class="ad" style="left:662.0px;top:576.0px;border-left:4.0px solid transparent;border-right:4.0px solid transparent;border-top:5px solid #9a9a9a;"></div>
<div class="t" style="left:683.60px;top:570.00px;transform:scaleX(0.9667);">Price Type</div>
<div class="cb" style="left:759px;top:564px;width:64px;height:28px;"></div>
<div class="t" style="left:763.60px;top:570.00px;transform:scaleX(0.9800);">Bid</div>
<div class="ad" style="left:809.0px;top:576.0px;border-left:4.0px solid transparent;border-right:4.0px solid transparent;border-top:5px solid #9a9a9a;"></div>
<svg class="ic" style="left:829px;top:566px" width="24" height="24" viewBox="0 0 24 24"><line x1="3.6" y1="19.7" x2="8.8" y2="14.5" stroke="#b0b0b0" stroke-width="2.9" stroke-linecap="round"/><line x1="3.6" y1="19.7" x2="8.8" y2="14.5" stroke="#232323" stroke-width="1.0" stroke-linecap="round"/><circle cx="13.05" cy="10.1" r="5.4" fill="#222222" stroke="#b0b0b0" stroke-width="1.3"/><circle cx="13.05" cy="10.1" r="3.75" fill="#a3a3a3"/></svg>
<svg class="ic" style="left:855.2px;top:567px" width="24" height="24" viewBox="0 0 24 24"><g stroke-width="2.7" stroke-linecap="round" filter="url(#bl)"><line x1="5.4" y1="4.9" x2="19.1" y2="18.5" stroke="url(#rg1)"/><line x1="19.3" y1="5.0" x2="5.4" y2="18.9" stroke="url(#rg2)"/></g></svg>
<div class="t" style="left:22.10px;top:606.00px;transform:scaleX(0.9915);">Timeframe</div>
<div class="cb" style="left:97px;top:600px;width:86px;height:28px;"></div>
<div class="t" style="left:101.60px;top:606.00px;transform:scaleX(0.9731);">Day</div>
<div class="ad" style="left:169.0px;top:612.0px;border-left:4.0px solid transparent;border-right:4.0px solid transparent;border-top:5px solid #9a9a9a;"></div>
<div class="t" style="left:190.80px;top:606.00px;transform:scaleX(1.0213);">Interval</div>
<div class="nb" style="left:244px;top:600px;width:50px;height:28px;"></div>
<div class="t" style="left:261px;top:606px">1</div>
<div class="ad" style="left:281.0px;top:604.55px;border-left:4.0px solid transparent;border-right:4.0px solid transparent;border-bottom:4.5px solid #9a9a9a;"></div>
<div class="ad" style="left:281.0px;top:617.75px;border-left:4.0px solid transparent;border-right:4.0px solid transparent;border-top:4.5px solid #9a9a9a;"></div>
<div class="t" style="left:301.60px;top:606.00px;transform:scaleX(1.0162);">Build mode</div>
<div class="cb" style="left:386px;top:600px;width:290px;height:28px;"></div>
<div class="t" style="left:390.60px;top:606.00px;transform:scaleX(0.9848);">Lower timeframe (OHLC points)</div>
<div class="ad" style="left:662.0px;top:612.0px;border-left:4.0px solid transparent;border-right:4.0px solid transparent;border-top:5px solid #9a9a9a;"></div>
<div class="t" style="left:683.40px;top:606.00px;transform:scaleX(0.9761);">Source</div>
<div class="cb" style="left:737px;top:600px;width:86px;height:28px;"></div>
<div class="t" style="left:742.60px;top:606.00px;transform:scaleX(0.9333);">Tick</div>
<div class="ad" style="left:809.0px;top:612.0px;border-left:4.0px solid transparent;border-right:4.0px solid transparent;border-top:5px solid #9a9a9a;"></div>
<div class="t" style="left:830.50px;top:606.00px;transform:scaleX(0.9667);">Price Type</div>
<div class="cb" style="left:906px;top:600px;width:64px;height:28px;"></div>
<div class="t" style="left:910.60px;top:606.00px;transform:scaleX(0.9071);">Last</div>
<div class="ad" style="left:956.0px;top:612.0px;border-left:4.0px solid transparent;border-right:4.0px solid transparent;border-top:5px solid #9a9a9a;"></div>
<svg class="ic" style="left:976px;top:602px" width="24" height="24" viewBox="0 0 24 24"><line x1="3.6" y1="19.7" x2="8.8" y2="14.5" stroke="#b0b0b0" stroke-width="2.9" stroke-linecap="round"/><line x1="3.6" y1="19.7" x2="8.8" y2="14.5" stroke="#232323" stroke-width="1.0" stroke-linecap="round"/><circle cx="13.05" cy="10.1" r="5.4" fill="#222222" stroke="#b0b0b0" stroke-width="1.3"/><circle cx="13.05" cy="10.1" r="3.75" fill="#a3a3a3"/></svg>
<svg class="ic" style="left:1002.2px;top:603px" width="24" height="24" viewBox="0 0 24 24"><g stroke-width="2.7" stroke-linecap="round" filter="url(#bl)"><line x1="5.4" y1="4.9" x2="19.1" y2="18.5" stroke="url(#rg1)"/><line x1="19.3" y1="5.0" x2="5.4" y2="18.9" stroke="url(#rg2)"/></g></svg>
<div class="t" style="left:22.10px;top:642.00px;transform:scaleX(0.9915);">Timeframe</div>
<div class="cb" style="left:97px;top:636px;width:86px;height:28px;"></div>
<div class="t" style="left:102.60px;top:642.00px;transform:scaleX(0.9632);">Week</div>
<div class="ad" style="left:169.0px;top:648.0px;border-left:4.0px solid transparent;border-right:4.0px solid transparent;border-top:5px solid #9a9a9a;"></div>
<div class="t" style="left:190.80px;top:642.00px;transform:scaleX(1.0213);">Interval</div>
<div class="nb" style="left:244px;top:636px;width:50px;height:28px;"></div>
<div class="t" style="left:261px;top:642px">1</div>
<div class="ad" style="left:281.0px;top:640.55px;border-left:4.0px solid transparent;border-right:4.0px solid transparent;border-bottom:4.5px solid #9a9a9a;"></div>
<div class="ad" style="left:281.0px;top:653.75px;border-left:4.0px solid transparent;border-right:4.0px solid transparent;border-top:4.5px solid #9a9a9a;"></div>
<div class="t" style="left:301.60px;top:642.00px;transform:scaleX(1.0162);">Build mode</div>
<div class="cb" style="left:386px;top:636px;width:290px;height:28px;"></div>
<div class="t" style="left:390.60px;top:642.00px;">Lower timeframe (At bar close only)</div>
<div class="ad" style="left:662.0px;top:648.0px;border-left:4.0px solid transparent;border-right:4.0px solid transparent;border-top:5px solid #9a9a9a;"></div>
<div class="t" style="left:683.40px;top:642.00px;transform:scaleX(0.9761);">Source</div>
<div class="cb" style="left:737px;top:636px;width:86px;height:28px;"></div>
<div class="t" style="left:741.60px;top:642.00px;transform:scaleX(1.0636);">Minute</div>
<div class="ad" style="left:809.0px;top:648.0px;border-left:4.0px solid transparent;border-right:4.0px solid transparent;border-top:5px solid #9a9a9a;"></div>
<div class="t" style="left:830.50px;top:642.00px;transform:scaleX(0.9667);">Price Type</div>
<div class="cb" style="left:906px;top:636px;width:64px;height:28px;"></div>
<div class="t" style="left:911.60px;top:642.00px;transform:scaleX(0.9360);">Ask</div>
<div class="ad" style="left:956.0px;top:648.0px;border-left:4.0px solid transparent;border-right:4.0px solid transparent;border-top:5px solid #9a9a9a;"></div>
<svg class="ic" style="left:976px;top:638px" width="24" height="24" viewBox="0 0 24 24"><line x1="3.6" y1="19.7" x2="8.8" y2="14.5" stroke="#b0b0b0" stroke-width="2.9" stroke-linecap="round"/><line x1="3.6" y1="19.7" x2="8.8" y2="14.5" stroke="#232323" stroke-width="1.0" stroke-linecap="round"/><circle cx="13.05" cy="10.1" r="5.4" fill="#222222" stroke="#b0b0b0" stroke-width="1.3"/><circle cx="13.05" cy="10.1" r="3.75" fill="#a3a3a3"/></svg>
<svg class="ic" style="left:1002.2px;top:639px" width="24" height="24" viewBox="0 0 24 24"><g stroke-width="2.7" stroke-linecap="round" filter="url(#bl)"><line x1="5.4" y1="4.9" x2="19.1" y2="18.5" stroke="url(#rg1)"/><line x1="19.3" y1="5.0" x2="5.4" y2="18.9" stroke="url(#rg2)"/></g></svg>
<div class="t" style="left:22.10px;top:678.00px;transform:scaleX(0.9915);">Timeframe</div>
<div class="cb" style="left:97px;top:672px;width:86px;height:28px;"></div>
<div class="t" style="left:101.60px;top:678.00px;transform:scaleX(1.0925);">Month</div>
<div class="ad" style="left:169.0px;top:684.0px;border-left:4.0px solid transparent;border-right:4.0px solid transparent;border-top:5px solid #9a9a9a;"></div>
<div class="t" style="left:190.80px;top:678.00px;transform:scaleX(1.0213);">Interval</div>
<div class="nb" style="left:244px;top:672px;width:50px;height:28px;"></div>
<div class="t" style="left:261px;top:678px">1</div>
<div class="ad" style="left:281.0px;top:676.55px;border-left:4.0px solid transparent;border-right:4.0px solid transparent;border-bottom:4.5px solid #9a9a9a;"></div>
<div class="ad" style="left:281.0px;top:689.75px;border-left:4.0px solid transparent;border-right:4.0px solid transparent;border-top:4.5px solid #9a9a9a;"></div>
<div class="t" style="left:301.60px;top:678.00px;transform:scaleX(1.0162);">Build mode</div>
<div class="cb" style="left:386px;top:672px;width:290px;height:28px;"></div>
<div class="t" style="left:390.60px;top:678.00px;">OHL points</div>
<div class="ad" style="left:662.0px;top:684.0px;border-left:4.0px solid transparent;border-right:4.0px solid transparent;border-top:5px solid #9a9a9a;"></div>
<div class="t" style="left:683.60px;top:678.00px;transform:scaleX(0.9667);">Price Type</div>
<div class="cb" style="left:759px;top:672px;width:64px;height:28px;"></div>
<div class="t" style="left:763.60px;top:678.00px;transform:scaleX(0.9800);">Bid</div>
<div class="ad" style="left:809.0px;top:684.0px;border-left:4.0px solid transparent;border-right:4.0px solid transparent;border-top:5px solid #9a9a9a;"></div>
<svg class="ic" style="left:829px;top:674px" width="24" height="24" viewBox="0 0 24 24"><line x1="3.6" y1="19.7" x2="8.8" y2="14.5" stroke="#b0b0b0" stroke-width="2.9" stroke-linecap="round"/><line x1="3.6" y1="19.7" x2="8.8" y2="14.5" stroke="#232323" stroke-width="1.0" stroke-linecap="round"/><circle cx="13.05" cy="10.1" r="5.4" fill="#222222" stroke="#b0b0b0" stroke-width="1.3"/><circle cx="13.05" cy="10.1" r="3.75" fill="#a3a3a3"/></svg>
<svg class="ic" style="left:855.2px;top:675px" width="24" height="24" viewBox="0 0 24 24"><g stroke-width="2.7" stroke-linecap="round" filter="url(#bl)"><line x1="5.4" y1="4.9" x2="19.1" y2="18.5" stroke="url(#rg1)"/><line x1="19.3" y1="5.0" x2="5.4" y2="18.9" stroke="url(#rg2)"/></g></svg>
<div class="t" style="left:22.10px;top:714.00px;transform:scaleX(0.9915);">Timeframe</div>
<div class="cb" style="left:97px;top:708px;width:86px;height:28px;"></div>
<div class="t" style="left:101.60px;top:714.00px;transform:scaleX(0.9621);">Year</div>
<div class="ad" style="left:169.0px;top:720.0px;border-left:4.0px solid transparent;border-right:4.0px solid transparent;border-top:5px solid #9a9a9a;"></div>
<div class="t" style="left:190.80px;top:714.00px;transform:scaleX(1.0213);">Interval</div>
<div class="nb" style="left:244px;top:708px;width:50px;height:28px;"></div>
<div class="t" style="left:261px;top:714px">1</div>
<div class="ad" style="left:281.0px;top:712.55px;border-left:4.0px solid transparent;border-right:4.0px solid transparent;border-bottom:4.5px solid #9a9a9a;"></div>
<div class="ad" style="left:281.0px;top:725.75px;border-left:4.0px solid transparent;border-right:4.0px solid transparent;border-top:4.5px solid #9a9a9a;"></div>
<div class="t" style="left:301.60px;top:714.00px;transform:scaleX(1.0162);">Build mode</div>
<div class="cb" style="left:386px;top:708px;width:290px;height:28px;"></div>
<div class="t" style="left:390.60px;top:714.00px;transform:scaleX(0.9848);">Lower timeframe (OHLC points)</div>
<div class="ad" style="left:662.0px;top:720.0px;border-left:4.0px solid transparent;border-right:4.0px solid transparent;border-top:5px solid #9a9a9a;"></div>
<div class="t" style="left:683.40px;top:714.00px;transform:scaleX(0.9761);">Source</div>
<div class="cb" style="left:737px;top:708px;width:86px;height:28px;"></div>
<div class="t" style="left:741.60px;top:714.00px;transform:scaleX(0.9898);">Second</div>
<div class="ad" style="left:809.0px;top:720.0px;border-left:4.0px solid transparent;border-right:4.0px solid transparent;border-top:5px solid #9a9a9a;"></div>
<div class="t" style="left:830.50px;top:714.00px;transform:scaleX(0.9667);">Price Type</div>
<div class="cb" style="left:906px;top:708px;width:64px;height:28px;"></div>
<div class="t" style="left:911.60px;top:714.00px;transform:scaleX(0.9360);">Ask</div>
<div class="ad" style="left:956.0px;top:720.0px;border-left:4.0px solid transparent;border-right:4.0px solid transparent;border-top:5px solid #9a9a9a;"></div>
<svg class="ic" style="left:976px;top:710px" width="24" height="24" viewBox="0 0 24 24"><line x1="3.6" y1="19.7" x2="8.8" y2="14.5" stroke="#b0b0b0" stroke-width="2.9" stroke-linecap="round"/><line x1="3.6" y1="19.7" x2="8.8" y2="14.5" stroke="#232323" stroke-width="1.0" stroke-linecap="round"/><circle cx="13.05" cy="10.1" r="5.4" fill="#222222" stroke="#b0b0b0" stroke-width="1.3"/><circle cx="13.05" cy="10.1" r="3.75" fill="#a3a3a3"/></svg>
<svg class="ic" style="left:1002.2px;top:711px" width="24" height="24" viewBox="0 0 24 24"><g stroke-width="2.7" stroke-linecap="round" filter="url(#bl)"><line x1="5.4" y1="4.9" x2="19.1" y2="18.5" stroke="url(#rg1)"/><line x1="19.3" y1="5.0" x2="5.4" y2="18.9" stroke="url(#rg2)"/></g></svg>
<div class="bt" style="left:1364px;top:38px;width:180px;height:27px;"></div>
<div class="t" style="left:1386.80px;top:44.00px;transform:scaleX(1.0078);">Add Instrument</div>
<div class="ad" style="left:1530.65px;top:49.0px;border-left:3.75px solid transparent;border-right:3.75px solid transparent;border-top:5px solid #9a9a9a;"></div>
<div class="bt" style="left:1364px;top:73px;width:180px;height:27px;"></div>
<div class="t" style="left:1408.00px;top:79.00px;">Add Group</div>
<div class="ad" style="left:1530.65px;top:84.0px;border-left:3.75px solid transparent;border-right:3.75px solid transparent;border-top:5px solid #9a9a9a;"></div>
<div class="bt" style="left:1364px;top:108px;width:180px;height:27px;"></div>
<div class="t" style="left:1390.00px;top:114.00px;">Add Whole Type</div>
<div class="ad" style="left:1530.65px;top:119.0px;border-left:3.75px solid transparent;border-right:3.75px solid transparent;border-top:5px solid #9a9a9a;"></div>
<div class="hdr" style="left:4px;top:757px;width:1544px;height:31px;"></div>
<div class="t" style="left:9.80px;top:764.00px;transform:scaleX(1.0242);">Data Modeling</div>
<div class="pnl" style="left:4px;top:788px;width:1544px;height:94px;"></div>
<div class="t" style="left:7.10px;top:801.00px;transform:scaleX(0.9711);">Dates</div>
<div class="cb" style="left:96px;top:795px;width:141px;height:27px;"></div>
<div class="t" style="left:100.20px;top:800.30px;transform:scaleX(0.9689);">Custom Ranges</div>
<div class="ad" style="left:222.5px;top:806.0px;border-left:4.0px solid transparent;border-right:4.0px solid transparent;border-top:5px solid #9a9a9a;"></div>
<div class="t" style="left:239.90px;top:800.30px;">From</div>
<div class="nb" style="left:278px;top:793px;width:163px;height:28px;background:#1e1e1e;border-color:#3a3a3f"></div>
<div class="t" style="left:285.00px;top:799.00px;transform:scaleX(1.0161);">6/10/2024 8:53 AM</div>
<div style="position:absolute;left:278px;top:822.6px;width:163px;height:1.6px;background:#cf8a1c"></div>
<div class="cb" style="left:441px;top:793px;width:18px;height:28px;background:#2e2e30;border-color:#1a1a1a"></div>
<div class="ad" style="left:446.5px;top:803.8px;border-left:4.0px solid transparent;border-right:4.0px solid transparent;border-top:5px solid #e8e8e8;"></div>
<div class="t" style="left:463.30px;top:801.00px;transform:scaleX(0.9800);">To</div>
<div class="nb" style="left:482px;top:793px;width:172px;height:28px;background:#1c1c1c;border-color:#3a3a3f"></div>
<div style="position:absolute;left:634px;top:794px;width:19px;height:26px;background:#262628;border-left:1px solid #36363b;box-sizing:border-box"></div>
<div class="t" style="left:488.60px;top:799.00px;">6/7/2024 8:00 PM</div>
<div class="ad" style="left:641.25px;top:804.0px;border-left:3.75px solid transparent;border-right:3.75px solid transparent;border-top:5px solid #8a8a8a;"></div>
<div style="position:absolute;left:423.0px;top:802.2px;width:2.8px;height:2.8px;background:#b8b8b8"></div><div style="position:absolute;left:423.0px;top:805.9px;width:2.8px;height:2.8px;background:#b8b8b8"></div><div style="position:absolute;left:423.0px;top:809.6px;width:2.8px;height:2.8px;background:#b8b8b8"></div><div style="position:absolute;left:426.7px;top:802.2px;width:2.8px;height:2.8px;background:#b8b8b8"></div><div style="position:absolute;left:426.7px;top:805.9px;width:2.8px;height:2.8px;background:#b8b8b8"></div><div style="position:absolute;left:426.7px;top:809.6px;width:2.8px;height:2.8px;background:#b8b8b8"></div><div style="position:absolute;left:430.4px;top:802.2px;width:2.8px;height:2.8px;background:#b8b8b8"></div><div style="position:absolute;left:430.4px;top:805.9px;width:2.8px;height:2.8px;background:#b8b8b8"></div><div style="position:absolute;left:430.4px;top:809.6px;width:2.8px;height:2.8px;background:#b8b8b8"></div>
<div style="position:absolute;left:617.0px;top:802.0px;width:2.8px;height:2.8px;background:#b8b8b8"></div><div style="position:absolute;left:617.0px;top:805.7px;width:2.8px;height:2.8px;background:#b8b8b8"></div><div style="position:absolute;left:617.0px;top:809.4px;width:2.8px;height:2.8px;background:#b8b8b8"></div><div style="position:absolute;left:620.7px;top:802.0px;width:2.8px;height:2.8px;background:#b8b8b8"></div><div style="position:absolute;left:620.7px;top:805.7px;width:2.8px;height:2.8px;background:#b8b8b8"></div><div style="position:absolute;left:620.7px;top:809.4px;width:2.8px;height:2.8px;background:#b8b8b8"></div><div style="position:absolute;left:624.4px;top:802.0px;width:2.8px;height:2.8px;background:#b8b8b8"></div><div style="position:absolute;left:624.4px;top:805.7px;width:2.8px;height:2.8px;background:#b8b8b8"></div><div style="position:absolute;left:624.4px;top:809.4px;width:2.8px;height:2.8px;background:#b8b8b8"></div>
<div class="bt" style="left:661px;top:795px;width:164px;height:27px;"></div>
<div class="t" style="left:666.70px;top:801.00px;transform:scaleX(0.9927);">Download missed data</div>
<div class="t" style="left:7.40px;top:834.00px;transform:scaleX(0.9696);">Weekdays</div>
<div class="cb" style="left:97px;top:833px;width:17px;height:16px;"></div>
<div class="t" style="left:122.00px;top:834.00px;transform:scaleX(1.0040);">Custom</div>
<div class="t" style="left:7.75px;top:861.00px;transform:scaleX(0.9805);">Time ranges</div>
<div class="cb" style="left:97px;top:861px;width:17px;height:16px;"></div>
<div class="t" style="left:122.00px;top:861.00px;transform:scaleX(1.0040);">Custom</div>
<div style="position:absolute;left:441px;top:821px;width:359px;height:178px;box-sizing:border-box;border:1px solid #3c3c44;border-top-color:#45454c;background:linear-gradient(#444444,#232323)"></div>
<div style="position:absolute;left:479px;top:881px;width:320px;height:1px;background:#34343b"></div>
<div class="t" style="left:485.40px;top:829.00px;transform:scaleX(1.0169);color:#d4d4d4">Min date available for all instruments/periods</div>
<div class="t" style="left:485.40px;top:858.00px;transform:scaleX(1.0263);color:#d4d4d4">Most min date from input data</div>
<div class="t" style="left:486.40px;top:888.60px;transform:scaleX(0.9761);color:#d4d4d4">Week ago</div>
<div class="t" style="left:485.40px;top:917.70px;transform:scaleX(1.0565);color:#d4d4d4">Month ago</div>
<div class="t" style="left:485.40px;top:946.50px;transform:scaleX(0.9759);color:#d4d4d4">Year ago</div>
<div class="t" style="left:485.40px;top:974.60px;transform:scaleX(0.9935);color:#d4d4d4">Start of this year</div>
<div style="position:absolute;left:768px;top:890px;width:413px;height:110px;box-sizing:border-box;border:1px solid #3f3f46;background:#212121"></div>
<div class="t" style="left:772.60px;top:897.00px;">Local data does not cover the requested period for elements:</div>
<div class="t" style="left:781px;top:917px">&bull;</div>
<div class="t" style="left:790.30px;top:917.00px;transform:scaleX(0.9629);">GBP/USD, Bid, Tick: 6/7/2024 8:39:49 PM</div>
<div class="t" style="left:781px;top:937px">&bull;</div>
<div class="t" style="left:790.30px;top:937.00px;transform:scaleX(0.9537);">GBP/USD, Bid, Second: no data</div>
<div class="t" style="left:781px;top:957px">&bull;</div>
<div class="t" style="left:790.30px;top:957.00px;transform:scaleX(0.9452);">EUR/USD, Last, Tick: no data</div>
<div class="t" style="left:781px;top:977px">&bull;</div>
<div class="t" style="left:790.30px;top:977.00px;transform:scaleX(0.9673);">EUR/USD, Ask, Second: 6/10/2024 8:53:14 AM</div>
</body></html>
